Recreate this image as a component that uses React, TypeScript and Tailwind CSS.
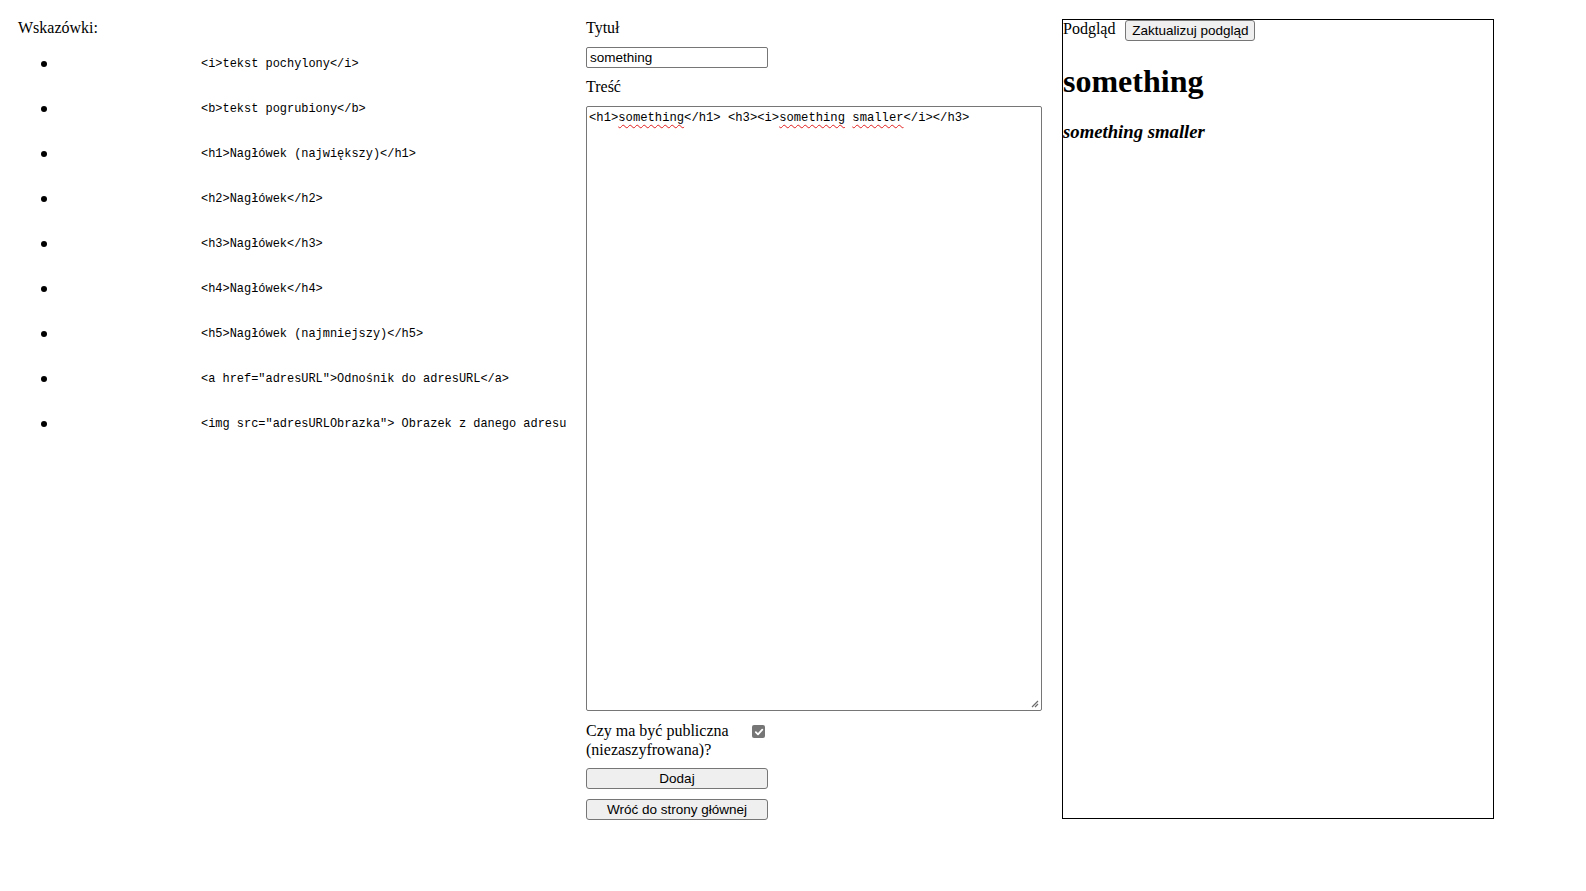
import React from "react";

const hints = [
    '<i>tekst pochylony</i>',
    '<b>tekst pogrubiony</b>',
    '<h1>Nagłówek (największy)</h1>',
    '<h2>Nagłówek</h2>',
    '<h3>Nagłówek</h3>',
    '<h4>Nagłówek</h4>',
    '<h5>Nagłówek (najmniejszy)</h5>',
    '<a href="adresURL">Odnośnik do adresURL</a>',
    '<img src="adresURLObrazka"> Obrazek z danego adresu',
];

const serif = "font-['Liberation_Serif','Times_New_Roman',serif]";
const sans = "font-['Liberation_Sans',Arial,sans-serif]";
const mono = "font-['Liberation_Mono','Courier_New',monospace]";

const Spell = ({ children }: { children: React.ReactNode }) => (
    <span className="underline decoration-wavy decoration-[#e11d1d] decoration-1 underline-offset-[3px]">{children}</span>
);

const App = () => {
    return (
        <div className={`flex items-start bg-white text-black min-h-[891px] ${serif} text-[16px]`}>
            {/* Wskazówki */}
            <div className="w-[586px] shrink-0 pl-[18px] pt-[19px]">
                <div className="h-[18px] leading-[18px]">Wskazówki:</div>
                <ul className="mt-[4px]">
                    {hints.map((h) => (
                        <li key={h} className="h-[45px] flex items-center">
                            <span className="ml-[23px] w-[6px] h-[6px] rounded-full bg-black shrink-0" />
                            <code className={`ml-[154px] pt-[2px] whitespace-nowrap text-[11.95px] ${mono}`}>{h}</code>
                        </li>
                    ))}
                </ul>
            </div>

            {/* Formularz */}
            <div className="w-[456px] shrink-0 pt-[19px] flex flex-col">
                <label className="h-[18px] leading-[18px]">Tytuł</label>
                <div className={`mt-[10px] w-[182px] h-[21px] border border-[#767676] rounded-[2px] pl-[3px] pr-[2px] pt-[1px] flex items-center text-[13.5px] ${sans}`}>
                    something
                </div>
                <label className="mt-[10px] h-[18px] leading-[18px]">Treść</label>
                <div className="relative mt-[10px] w-[456px] h-[605px] border border-[#767676] rounded-[2px] px-[2px] pt-[4px]">
                    <div className={`text-[12.2px] leading-[15px] whitespace-pre ${mono}`}>
                        {'<h1>'}<Spell>something</Spell>{'</h1> <h3><i>'}<Spell>something</Spell>{' '}<Spell>smaller</Spell>{'</i></h3>'}
                    </div>
                    <svg className="absolute right-[2px] bottom-[2px]" width="9" height="9" viewBox="0 0 9 9">
                        <path d="M8 2 L2 8 M8 5 L5 8" stroke="#6b6b6b" strokeWidth="1.2" fill="none" />
                    </svg>
                </div>
                <div className="mt-[9.5px] flex items-start">
                    <label className="w-[166px] leading-[19px]">Czy ma być publiczna (niezaszyfrowana)?</label>
                    <span className="mt-[4.5px] w-[13px] h-[13px] rounded-[2px] bg-[#767676] flex items-center justify-center">
                        <svg width="10" height="10" viewBox="0 0 10 10">
                            <path d="M1.8 5.2 L4 7.4 L8.3 2.6" stroke="white" strokeWidth="1.8" fill="none" strokeLinecap="round" strokeLinejoin="round" />
                        </svg>
                    </span>
                </div>
                <button className={`mt-[9.5px] w-[182px] h-[21px] bg-[#efefef] border border-[#767676] rounded-[3px] text-[13.5px] ${sans}`}>
                    Dodaj
                </button>
                <button className={`mt-[9.5px] w-[182px] h-[21px] bg-[#efefef] border border-[#767676] rounded-[3px] text-[13.5px] ${sans}`}>
                    Wróć do strony głównej
                </button>
            </div>

            {/* Podgląd */}
            <div className="ml-[20px] mt-[19px] w-[432px] h-[800px] shrink-0 border border-black">
                <div className="flex items-start">
                    <span className="leading-[18px]">Podgląd</span>
                    <button className={`ml-[10px] w-[130px] h-[21px] bg-[#efefef] border border-[#767676] rounded-[3px] text-[13.5px] ${sans}`}>
                        Zaktualizuj podgląd
                    </button>
                </div>
                <h1 className="mt-[22px] text-[32px] font-bold leading-[37px]">something</h1>
                <h3 className="mt-[21px] text-[18.72px] font-bold italic leading-[21.5px]">something smaller</h3>
            </div>
        </div>
    );
};

export default App;
